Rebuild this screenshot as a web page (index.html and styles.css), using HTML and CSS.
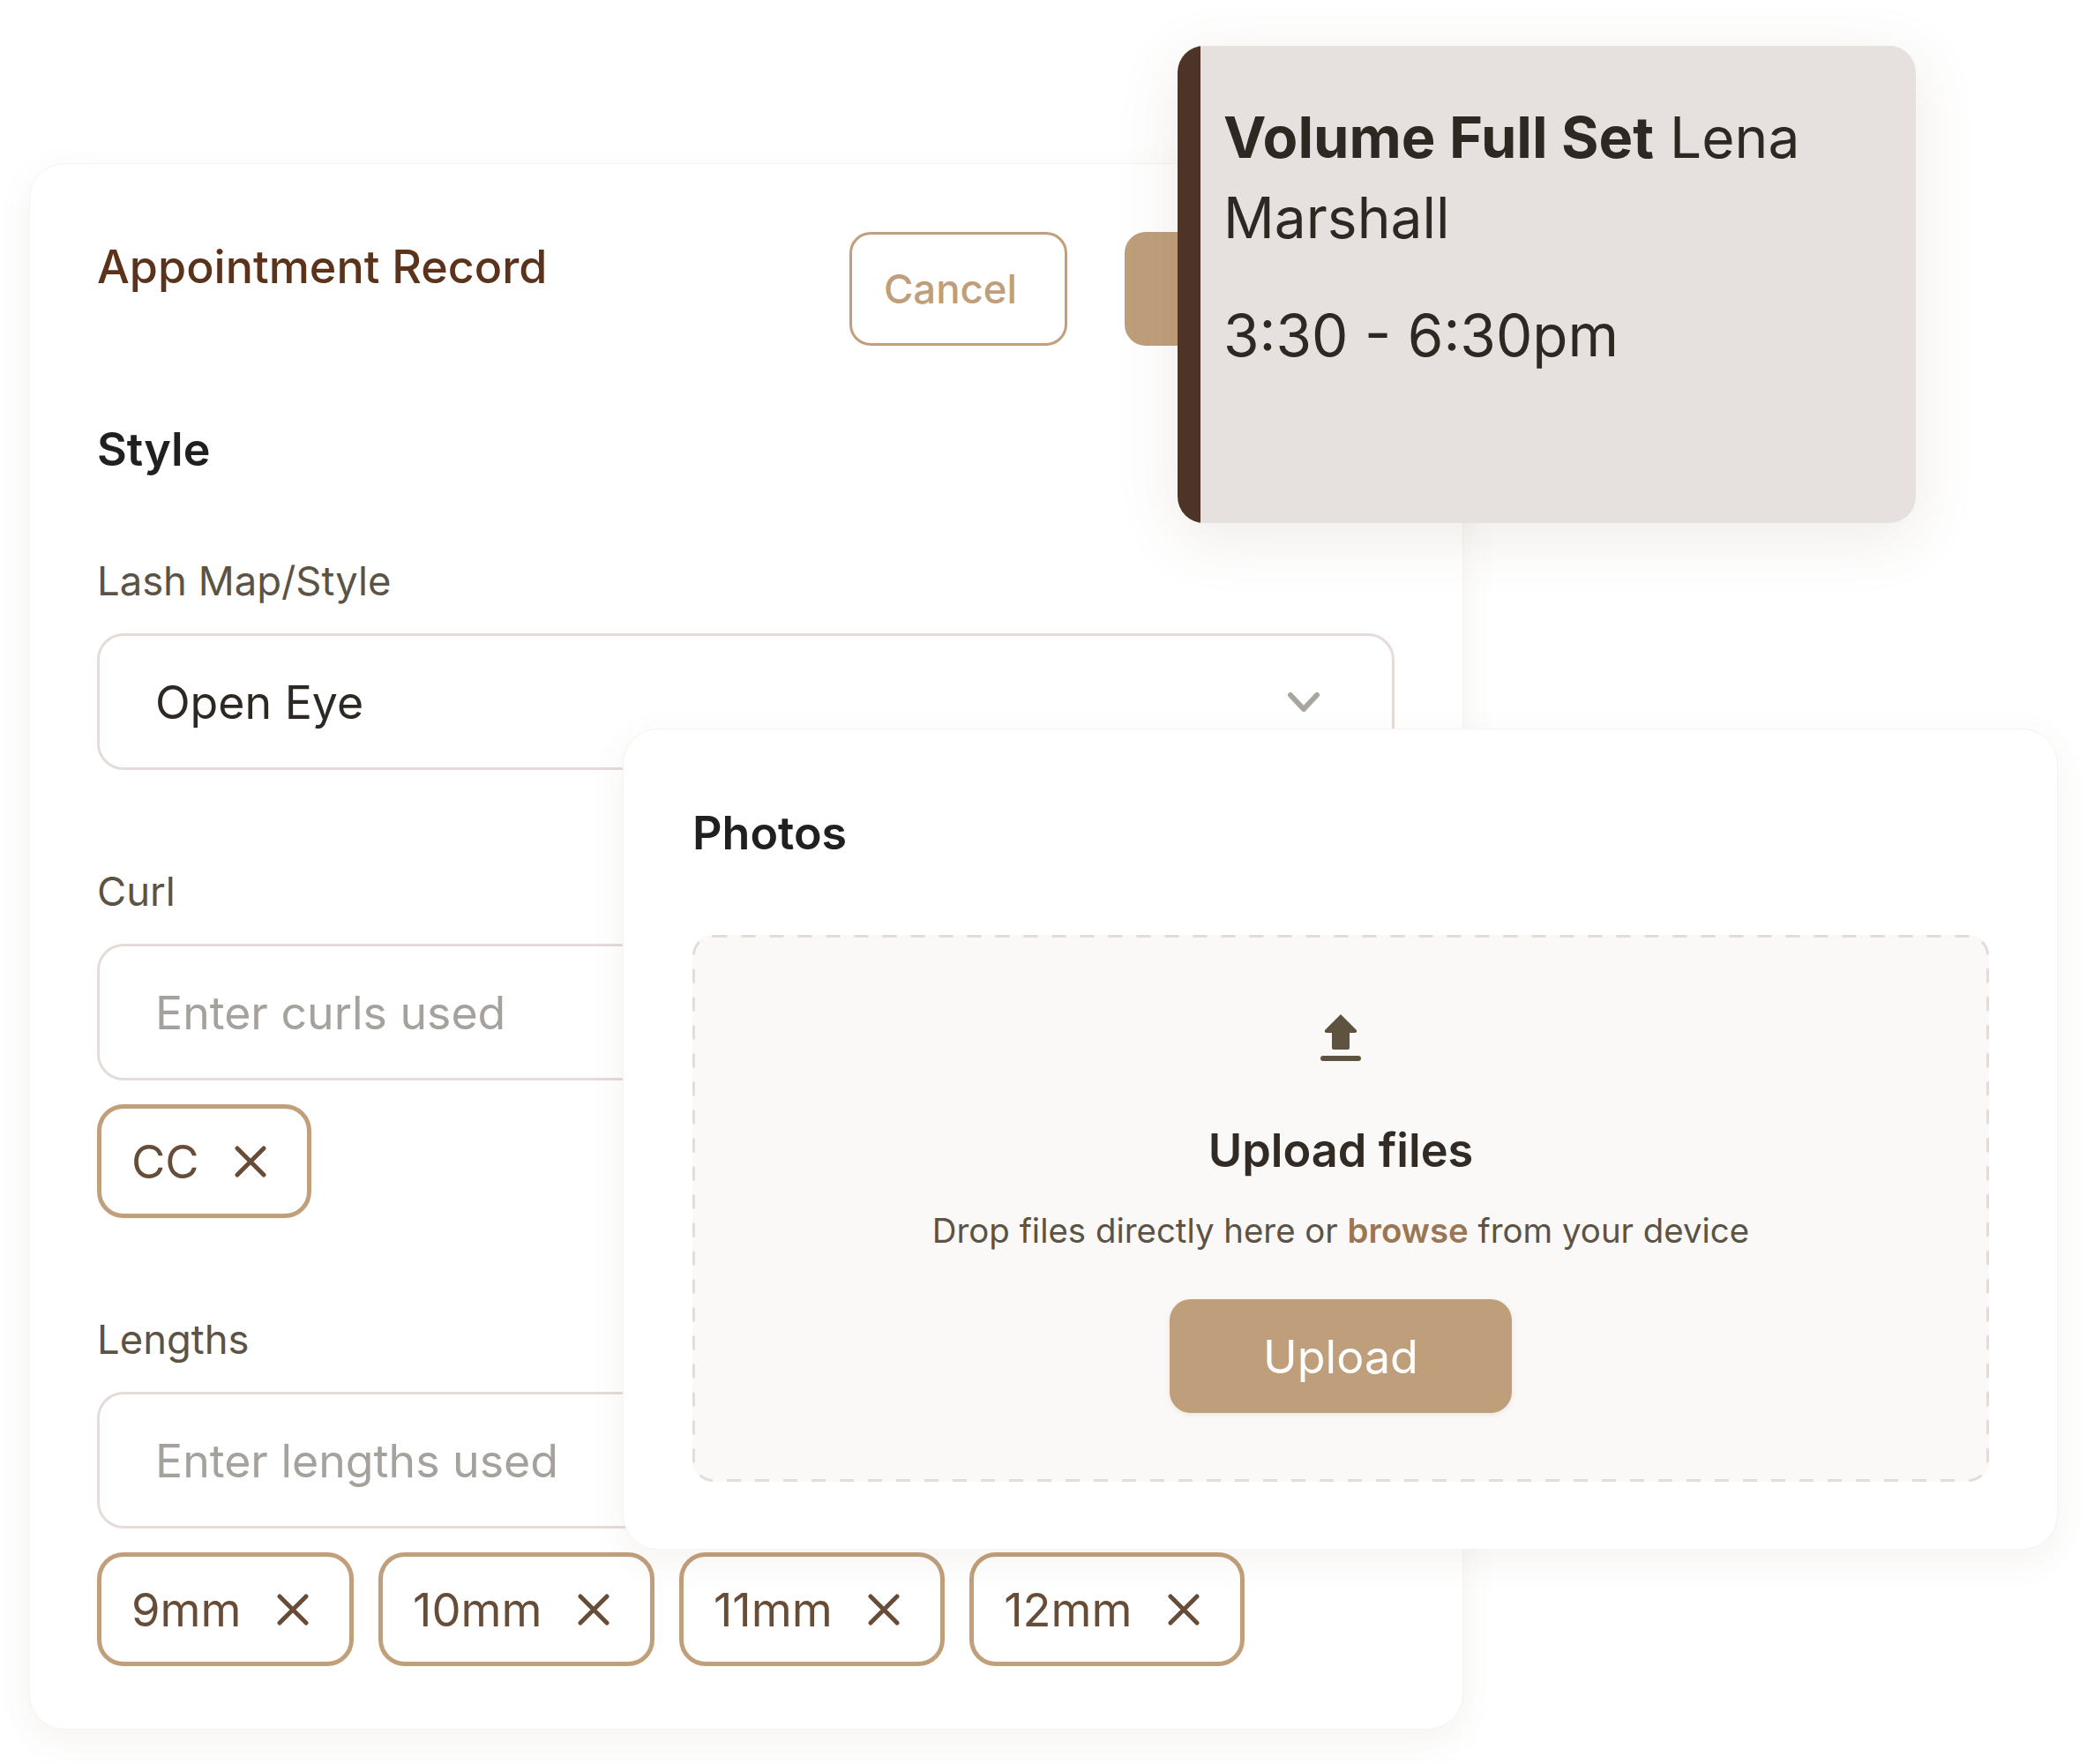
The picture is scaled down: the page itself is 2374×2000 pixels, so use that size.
FILE: index.html
```html
<!DOCTYPE html>
<html lang="en">
  <head>
    <meta charset="UTF-8" />
    <title>Appointment Record</title>
    <link rel="stylesheet" href="styles.css">
  </head>
  <body>
    <div class="canvas">
      <div class="card recordCard">
        <div class="recordHead">
          <h1 class="recordTitle">Appointment Record</h1>
          <div class="recordBtns">
            <button class="btn cancelBtn">Cancel</button>
            <button class="btn saveBtn" aria-label="Save"></button>
          </div>
        </div>
        <h2 class="sectionTitle styleTitle">Style</h2>
        <div class="field firstField">
          <label class="fieldLabel">Lash Map/Style</label>
          <div class="input selectInput">
            <span>Open Eye</span>
            <svg class="chevron" width="36" height="22" viewBox="0 0 36 22"><path d="M3 3 L18 19 L33 3" /></svg>
          </div>
        </div>
        <div class="field">
          <label class="fieldLabel">Curl</label>
          <div class="input placeholder">Enter curls used</div>
          <div class="chips">
            <div class="chip">CC<svg class="chipX" width="36" height="36" viewBox="0 0 36 36"><path d="M3 3 L33 33 M33 3 L3 33" /></svg></div>
          </div>
        </div>
        <div class="field">
          <label class="fieldLabel">Lengths</label>
          <div class="input placeholder">Enter lengths used</div>
          <div class="chips">
            <div class="chip">9mm<svg class="chipX" width="36" height="36" viewBox="0 0 36 36"><path d="M3 3 L33 33 M33 3 L3 33" /></svg></div>
            <div class="chip">10mm<svg class="chipX" width="36" height="36" viewBox="0 0 36 36"><path d="M3 3 L33 33 M33 3 L3 33" /></svg></div>
            <div class="chip">11mm<svg class="chipX" width="36" height="36" viewBox="0 0 36 36"><path d="M3 3 L33 33 M33 3 L3 33" /></svg></div>
            <div class="chip">12mm<svg class="chipX" width="36" height="36" viewBox="0 0 36 36"><path d="M3 3 L33 33 M33 3 L3 33" /></svg></div>
          </div>
        </div>
      </div>

      <div class="eventCard">
        <p class="eventName"><b>Volume Full Set</b> Lena<br>Marshall</p>
        <p class="eventTime">3:30 - 6:30pm</p>
      </div>

      <div class="card photosCard">
        <h2 class="sectionTitle">Photos</h2>
        <div class="dropZone">
          <svg class="dashes" width="1470" height="620" viewBox="0 0 1470 620"><rect x="1.5" y="1.5" width="1467" height="617" rx="22" /></svg>
          <svg class="uploadIcon" width="46" height="54" viewBox="0 0 46 54">
            <path d="M23 1 L41 19 Q42 22 39 22 L33 22 L33 39 Q33 41 31 41 L15 41 Q13 41 13 39 L13 22 L7 22 Q4 22 5 19 Z" />
            <rect x="0" y="48" width="46" height="6" rx="3" />
          </svg>
          <h3 class="dropTitle">Upload files</h3>
          <p class="dropText">Drop files directly here or <b>browse</b> from your device</p>
          <button class="btn uploadBtn">Upload</button>
        </div>
      </div>
    </div>
  </body>
</html>
```

FILE: styles.css
```css
* {
  box-sizing: border-box;
}
html,
body {
  margin: 0;
  padding: 0;
  background-color: #fff;
}
h1,
h2,
h3,
p {
  margin: 0;
}
.canvas {
  position: relative;
  width: 2374px;
  height: 2000px;
  overflow: hidden;
  font-family: Inter, "Liberation Sans", sans-serif;
}
.card {
  position: absolute;
  background-color: #fff;
  border: 1px solid #f6f3f0;
  border-radius: 40px;
  box-shadow: 0 12px 40px rgba(120, 90, 60, 0.07);
}

/* appointment record */
.recordCard {
  left: 33px;
  top: 185px;
  width: 1626px;
  height: 1776px;
  padding: 77px 77px 0 76px;
}
.recordHead {
  display: flex;
  justify-content: space-between;
}
.recordTitle {
  font-size: 52px;
  font-weight: 500;
  line-height: 80px;
  color: #5a331a;
}
.recordBtns {
  display: flex;
  gap: 65px;
}
.btn {
  height: 129px;
  border-radius: 24px;
  font-family: inherit;
  font-size: 45.5px;
  cursor: pointer;
}
.cancelBtn {
  width: 247px;
  padding: 0 18px 0 0;
  border: 3px solid #c19f7b;
  background-color: #fff;
  color: #bf9e7b;
  font-weight: 500;
}
.saveBtn {
  width: 306px;
  border: 0;
  background-color: #bf9e7b;
}
.sectionTitle {
  font-size: 52px;
  font-weight: 600;
  line-height: 70px;
  color: #202020;
}
.styleTitle {
  margin-top: 83px;
}
.field {
  margin-top: 108px;
}
.firstField {
  margin-top: 84px;
}
.fieldLabel {
  display: block;
  font-size: 45.4px;
  line-height: 60px;
  color: #5c5344;
}
.input {
  display: flex;
  align-items: center;
  height: 155px;
  margin-top: 29px;
  padding: 0 63px;
  border: 3.5px solid #e4dcd9;
  border-radius: 30px;
  font-size: 51.8px;
  color: #2e2823;
}
.selectInput {
  justify-content: space-between;
  padding-right: 82px;
}
.placeholder {
  color: #a5a29d;
}
.chevron path {
  fill: none;
  stroke: #a8a5a0;
  stroke-width: 6;
  stroke-linecap: round;
  stroke-linejoin: round;
}
.chips {
  display: flex;
  gap: 28px;
  margin-top: 27px;
}
.chip {
  display: flex;
  align-items: center;
  gap: 40px;
  height: 129px;
  padding: 0 46.5px 0 34px;
  border: 5px solid #c19f7b;
  border-radius: 30px;
  font-size: 52.5px;
  font-kerning: none;
  color: #674c38;
}
.chipX path {
  fill: none;
  stroke: #674c38;
  stroke-width: 5;
  stroke-linecap: round;
}

/* event on the calendar */
.eventCard {
  position: absolute;
  left: 1335px;
  top: 52px;
  width: 837px;
  height: 541px;
  padding: 58px 60px 0 52px;
  border-radius: 30px;
  background: linear-gradient(to right, #4d3328 26px, #e6e1de 26px);
  box-shadow: 0 16px 70px rgba(120, 90, 60, 0.12);
  font-size: 65.7px;
  line-height: 91px;
  color: #2e2823;
}
.eventName {
  font-size: 64px;
}
.eventName b {
  font-size: 65px;
  font-weight: 700;
}
.eventTime {
  margin-top: 43px;
}

/* photos */
.photosCard {
  left: 706px;
  top: 826px;
  width: 1627px;
  height: 931px;
  padding: 83px 76px 0 78px;
}
.dropZone {
  position: relative;
  display: flex;
  flex-direction: column;
  align-items: center;
  width: 1470px;
  height: 620px;
  margin-top: 80px;
  padding-top: 89px;
  border-radius: 22px;
  background-color: #fbf9f8;
}
.dashes {
  position: absolute;
  left: 0;
  top: 0;
}
.dashes rect {
  fill: none;
  stroke: #e3dcd9;
  stroke-width: 3;
  stroke-dasharray: 16 16;
}
.uploadIcon {
  fill: #5e533f;
}
.dropTitle {
  margin-top: 66px;
  font-size: 52.3px;
  font-weight: 600;
  line-height: 70px;
  color: #322a24;
}
.dropText {
  margin-top: 28px;
  font-size: 38.4px;
  line-height: 56px;
  color: #5c5344;
}
.dropText b {
  font-weight: 600;
  color: #9a7653;
}
.uploadBtn {
  width: 388px;
  margin-top: 50px;
  padding-top: 2px;
  border: 0;
  background-color: #bf9e7b;
  box-shadow: 0 2px 6px rgba(120, 90, 60, 0.12);
  color: #fff;
  font-size: 52px;
}
```
